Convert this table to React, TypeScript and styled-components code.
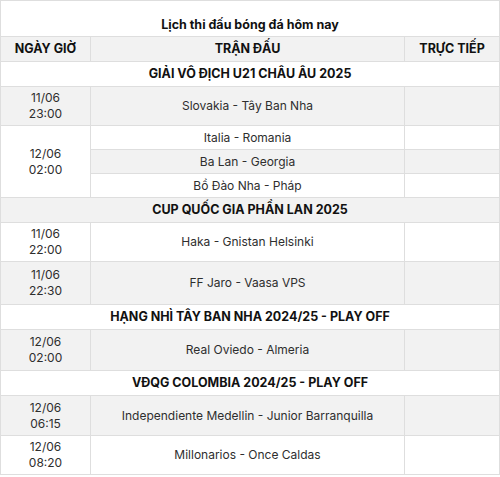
import React from "react";
import styled, { createGlobalStyle } from "styled-components";

const Global = createGlobalStyle`
  html, body { margin: 0; padding: 0; background: #fff; }
  body { font-family: "Inter", "Noto Sans", sans-serif; }
`;

const Table = styled.table`
  width: 499px;
  border-collapse: collapse;
  table-layout: fixed;
  font-size: 12px;
  color: #2e2e2e;
  tr:nth-child(even) { background: #f2f2f2; }
`;

const Cell = styled.td<{ $bold?: boolean; $h?: number }>`
  border: 1px solid #dedede;
  text-align: center;
  vertical-align: middle;
  padding: 3px 6px;
  line-height: 16px;
  height: ${(p) => (p.$h ? `${p.$h - 7}px` : "auto")};
  font-weight: ${(p) => (p.$bold ? 700 : 400)};
  color: ${(p) => (p.$bold ? "#111" : "#2e2e2e")};
  font-size: ${(p) => (p.$bold ? "12.5px" : "12px")};
`;

const TitleCell = styled.td`
  border: 1px solid #dedede;
  text-align: center;
  font-weight: 700;
  color: #111;
  padding: 16px 6px 3px;
  line-height: 16px;
  font-size: 12.5px;
`;

const HeadCell = styled.th`
  border: 1px solid #dedede;
  text-align: center;
  font-weight: 700;
  color: #111;
  padding: 4px 6px;
  line-height: 16px;
  font-size: 12.5px;
`;

type Match = { teams: string };
type Slot = { date: string; time: string; h: number; matches: Match[] };
type League = { name: string; slots: Slot[] };

const leagues: League[] = [
  {
    name: "GIẢI VÔ ĐỊCH U21 CHÂU ÂU 2025",
    slots: [
      { date: "11/06", time: "23:00", h: 39, matches: [{ teams: "Slovakia - Tây Ban Nha" }] },
      {
        date: "12/06",
        time: "02:00",
        h: 24,
        matches: [
          { teams: "Italia - Romania" },
          { teams: "Ba Lan - Georgia" },
          { teams: "Bồ Đào Nha - Pháp" },
        ],
      },
    ],
  },
  {
    name: "CUP QUỐC GIA PHẦN LAN 2025",
    slots: [
      { date: "11/06", time: "22:00", h: 38, matches: [{ teams: "Haka - Gnistan Helsinki" }] },
      { date: "11/06", time: "22:30", h: 43, matches: [{ teams: "FF Jaro - Vaasa VPS" }] },
    ],
  },
  {
    name: "HẠNG NHÌ TÂY BAN NHA 2024/25 - PLAY OFF",
    slots: [{ date: "12/06", time: "02:00", h: 41, matches: [{ teams: "Real Oviedo - Almeria" }] }],
  },
  {
    name: "VĐQG COLOMBIA 2024/25 - PLAY OFF",
    slots: [
      { date: "12/06", time: "06:15", h: 40, matches: [{ teams: "Independiente Medellin - Junior Barranquilla" }] },
      { date: "12/06", time: "08:20", h: 39, matches: [{ teams: "Millonarios - Once Caldas" }] },
    ],
  },
];

export default function App() {
  return (
    <>
      <Global />
      <Table>
        <colgroup>
          <col style={{ width: 90 }} />
          <col style={{ width: 314 }} />
          <col style={{ width: 95 }} />
        </colgroup>
        <tbody>
          <tr>
            <TitleCell colSpan={3}>Lịch thi đấu bóng đá hôm nay</TitleCell>
          </tr>
          <tr>
            <HeadCell>NGÀY GIỜ</HeadCell>
            <HeadCell>TRẬN ĐẤU</HeadCell>
            <HeadCell>TRỰC TIẾP</HeadCell>
          </tr>
          {leagues.map((lg) => (
            <React.Fragment key={lg.name}>
              <tr>
                <Cell colSpan={3} $bold $h={25}>
                  {lg.name}
                </Cell>
              </tr>
              {lg.slots.map((s, si) =>
                s.matches.map((m, mi) => (
                  <tr key={`${si}-${mi}`}>
                    {mi === 0 && (
                      <Cell rowSpan={s.matches.length} style={s.matches.length > 1 ? { background: "#fff" } : undefined}>
                        {s.date}
                        <br />
                        {s.time}
                      </Cell>
                    )}
                    <Cell $h={s.h}>{m.teams}</Cell>
                    <Cell $h={s.h} />
                  </tr>
                ))
              )}
            </React.Fragment>
          ))}
        </tbody>
      </Table>
    </>
  );
}
